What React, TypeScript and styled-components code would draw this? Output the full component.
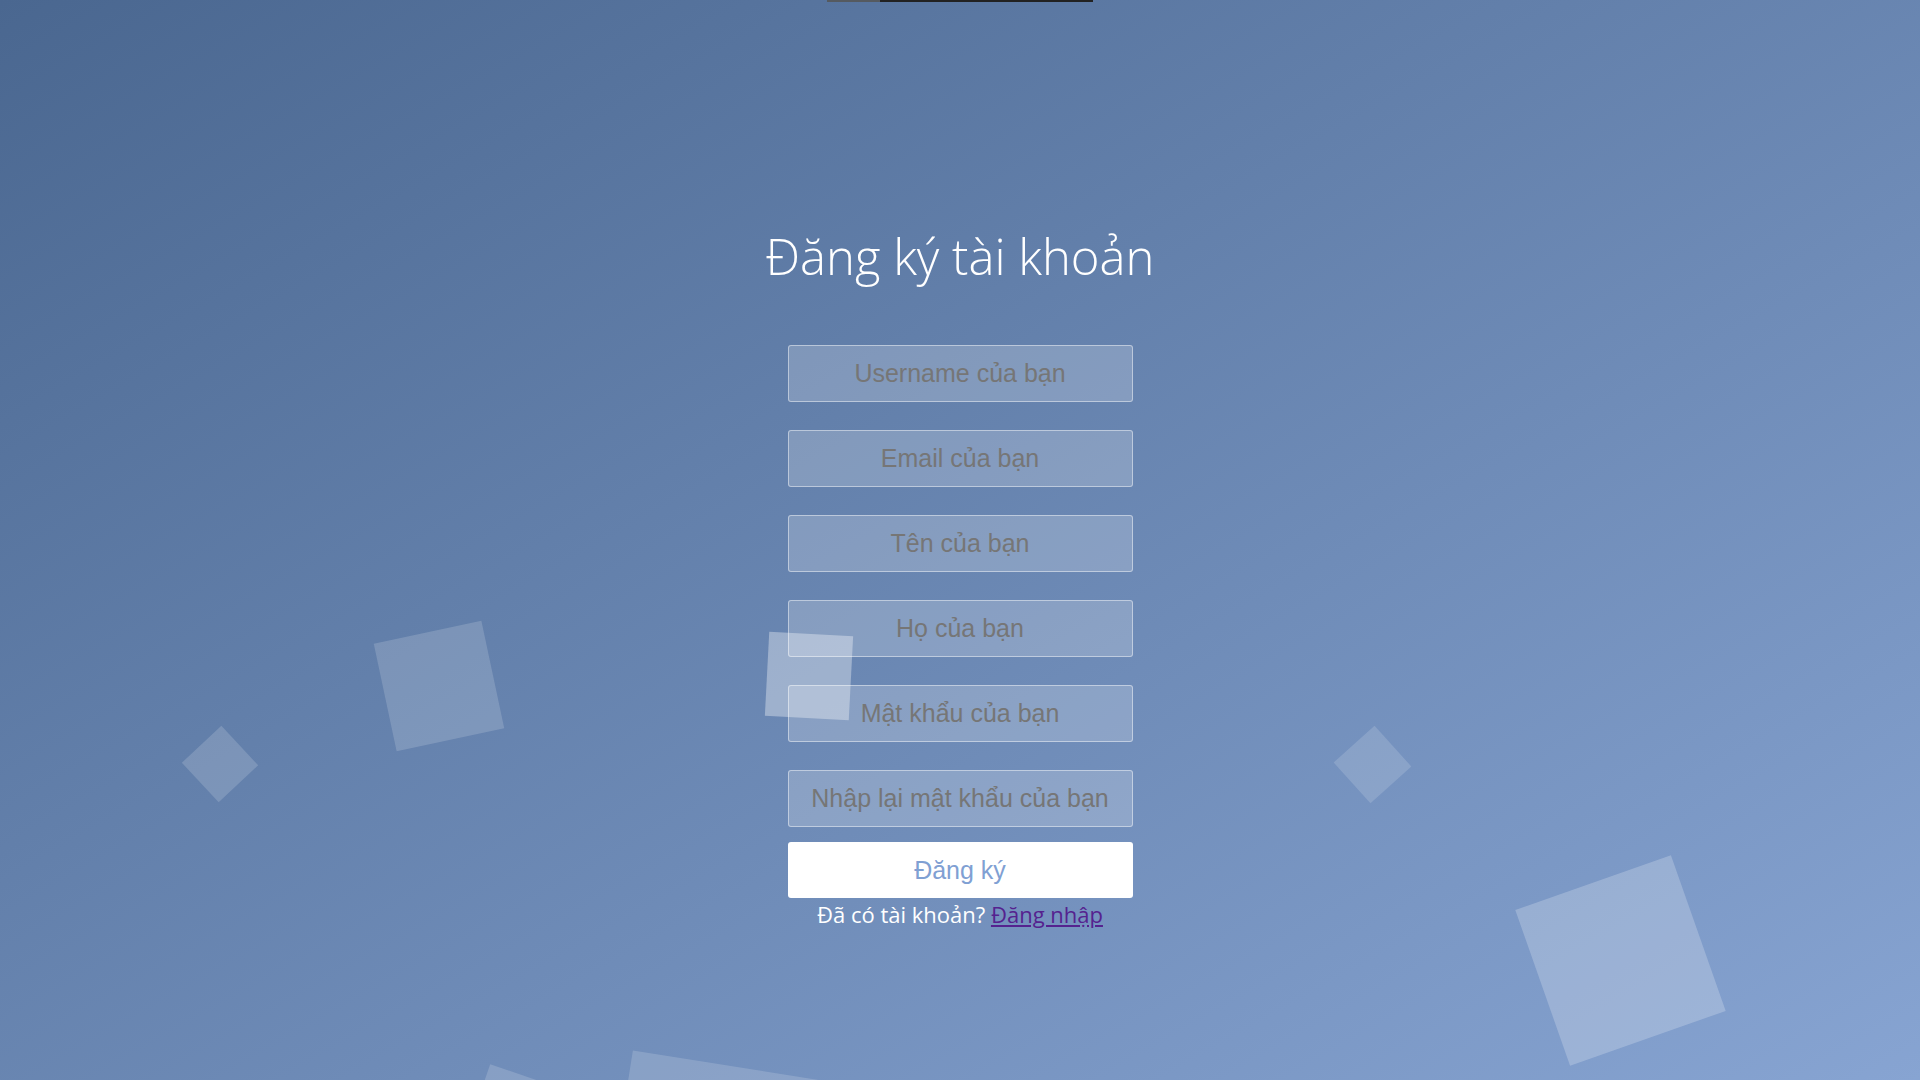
import React from "react";
import styled, { createGlobalStyle } from "styled-components";

const GlobalStyle = createGlobalStyle`
  html, body {
    margin: 0;
    padding: 0;
  }
  body {
    font-family: "Open Sans", "Noto Sans", sans-serif;
  }
  * {
    box-sizing: border-box;
  }
`;

const Page = styled.div`
  position: relative;
  width: 100%;
  height: 100vh;
  overflow: hidden;
  background: linear-gradient(to bottom right, #4a6790 0%, #87a4d2 100%);
`;

const TopBar = styled.div`
  position: absolute;
  top: 0;
  left: 50%;
  transform: translateX(-50%);
  width: 266px;
  height: 2px;
  display: flex;
  z-index: 3;
`;

const TopBarPart = styled.span<{ $w: number; $c: string }>`
  flex: ${(p) => (p.$w ? `0 0 ${p.$w}px` : "1 1 auto")};
  background: ${(p) => p.$c};
`;

const Bubble = styled.div<{
  $x: number;
  $y: number;
  $size: number;
  $rot: number;
  $alpha: number;
}>`
  position: absolute;
  left: ${(p) => p.$x - p.$size / 2}px;
  top: ${(p) => p.$y - p.$size / 2}px;
  width: ${(p) => p.$size}px;
  height: ${(p) => p.$size}px;
  transform: rotate(${(p) => p.$rot}deg);
  background: rgba(255, 255, 255, ${(p) => p.$alpha});
  z-index: 1;
`;

const Container = styled.div`
  position: relative;
  z-index: 2;
  display: flex;
  flex-direction: column;
  align-items: center;
  padding-top: 226px;
`;

const Title = styled.h1`
  margin: 0;
  font-family: "Open Sans", "Noto Sans", sans-serif;
  font-weight: 300;
  font-size: 49px;
  line-height: 60px;
  color: #ffffff;
`;

const Form = styled.form`
  margin-top: 59px;
  width: 345px;
  display: flex;
  flex-direction: column;
`;

const Field = styled.input<{ $gap: number }>`
  display: block;
  width: 100%;
  height: 57px;
  margin: 0 0 ${(p) => p.$gap}px 0;
  padding: 0 8px;
  border: 1px solid rgba(255, 255, 255, 0.45);
  border-radius: 3px;
  background: rgba(255, 255, 255, 0.2);
  font-family: "Liberation Sans", Arial, sans-serif;
  font-size: 25px;
  color: #ffffff;
  text-align: center;
  outline: none;

  &::placeholder {
    color: #767676;
    opacity: 1;
  }
`;

const SubmitButton = styled.button`
  display: block;
  width: 100%;
  height: 56px;
  border: 0;
  border-radius: 3px;
  background: #ffffff;
  color: #80a0d3;
  font-family: "Liberation Sans", Arial, sans-serif;
  font-size: 25px;
  cursor: pointer;
`;

const Hint = styled.p`
  margin: 2px 0 0;
  text-align: center;
  font-family: "Open Sans", "Noto Sans", sans-serif;
  font-size: 22px;
  line-height: 28px;
  color: #ffffff;
`;

const Link = styled.a`
  color: #55228f;
  text-decoration: underline;
`;

const bubbles = [
  { x: 220, y: 764, size: 54, rot: 47, alpha: 0.16 },
  { x: 439, y: 686, size: 110, rot: -12, alpha: 0.16 },
  { x: 809, y: 676, size: 84, rot: 3, alpha: 0.35 },
  { x: 1372, y: 764, size: 55, rot: 48, alpha: 0.15 },
  { x: 1620, y: 960, size: 165, rot: -19.4, alpha: 0.22 },
  { x: 515, y: 1115, size: 80, rot: 19, alpha: 0.16 },
  { x: 716, y: 1165, size: 200, rot: 9, alpha: 0.16 },
];

const fields = [
  { type: "text", placeholder: "Username của bạn" },
  { type: "email", placeholder: "Email của bạn" },
  { type: "text", placeholder: "Tên của bạn" },
  { type: "text", placeholder: "Họ của bạn" },
  { type: "password", placeholder: "Mật khẩu của bạn" },
  { type: "password", placeholder: "Nhập lại mật khẩu của bạn" },
];

export default function App() {
  return (
    <>
      <GlobalStyle />
      <Page>
        <TopBar>
          <TopBarPart $w={53} $c="#555a60" />
          <TopBarPart $w={0} $c="#222222" />
        </TopBar>
        {bubbles.map((b, i) => (
          <Bubble
            key={i}
            $x={b.x}
            $y={b.y}
            $size={b.size}
            $rot={b.rot}
            $alpha={b.alpha}
          />
        ))}
        <Container>
          <Title>Đăng ký tài khoản</Title>
          <Form onSubmit={(e) => e.preventDefault()}>
            {fields.map((f, i) => (
              <Field
                key={i}
                type={f.type}
                placeholder={f.placeholder}
                $gap={i === fields.length - 1 ? 15 : 28}
              />
            ))}
            <SubmitButton type="submit">Đăng ký</SubmitButton>
          </Form>
          <Hint>
            Đã có tài khoản? <Link href="#">Đăng nhập</Link>
          </Hint>
        </Container>
      </Page>
    </>
  );
}
